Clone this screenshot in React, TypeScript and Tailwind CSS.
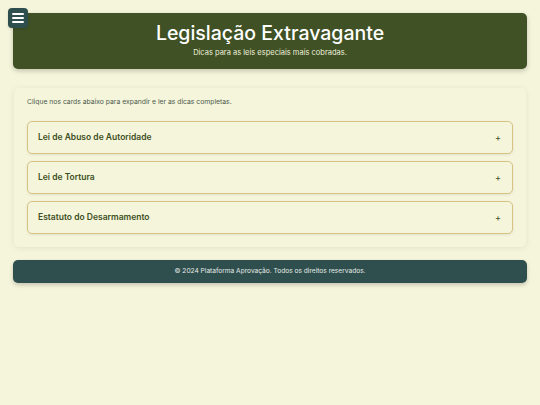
import { useState } from "react"

const laws = [
  "Lei de Abuso de Autoridade",
  "Lei de Tortura",
  "Estatuto do Desarmamento",
]

function LawCard({ title }: { title: string }) {
  const [open, setOpen] = useState(false)
  return (
    <button
      onClick={() => setOpen(!open)}
      className="flex h-[33px] w-full items-center justify-between rounded-[5px] border border-[#d8c283] bg-[#f5f5dc] px-[10px] text-left shadow-[0_1px_3px_rgba(0,0,0,0.08)]"
    >
      <span className="text-[8.5px] font-semibold text-[#3d4f22]">{title}</span>
      <span className="pr-[1px] text-[9px] text-[#3d4f22]">{open ? "−" : "+"}</span>
    </button>
  )
}

export default function App() {
  return (
    <div className="min-h-[405px] bg-[#f5f5dc] px-[13px] pt-[13px] font-['Inter',sans-serif]">
      <button className="absolute left-[8px] top-[8px] flex h-[20px] w-[20px] flex-col items-center justify-center gap-[2px] rounded-[4px] bg-[#2f4f4f] shadow">
        <span className="h-[2px] w-[12px] rounded bg-white" />
        <span className="h-[2px] w-[12px] rounded bg-white" />
        <span className="h-[2px] w-[12px] rounded bg-white" />
      </button>

      <header className="flex h-[56px] flex-col items-center rounded-[5px] bg-[#3f5125] pt-[8px] shadow-[0_2px_5px_rgba(0,0,0,0.2)]">
        <h1 className="text-[19.5px] font-medium leading-[24px] text-white">
          Legislação Extravagante
        </h1>
        <p className="mt-[3px] text-[7.5px] leading-[10px] text-[#f0f0dc]">
          Dicas para as leis especiais mais cobradas.
        </p>
      </header>

      <main className="mx-[1px] mt-[19px] rounded-[5px] bg-[#f5f5dc] px-[13px] pb-[13px] pt-[9px] shadow-[0_1px_6px_rgba(0,0,0,0.08)]">
        <p className="text-[6.8px] text-[#4b5a4b]">
          Clique nos cards abaixo para expandir e ler as dicas completas.
        </p>
        <div className="mt-[14px] flex flex-col gap-[7px]">
          {laws.map((law) => (
            <LawCard key={law} title={law} />
          ))}
        </div>
      </main>

      <footer className="mt-[13px] flex h-[23px] items-center justify-center rounded-[5px] bg-[#2f4f4f] shadow-[0_2px_4px_rgba(0,0,0,0.2)]">
        <p className="text-[6.6px] text-[#e8ece8]">
          © 2024 Plataforma Aprovação. Todos os direitos reservados.
        </p>
      </footer>
    </div>
  )
}
